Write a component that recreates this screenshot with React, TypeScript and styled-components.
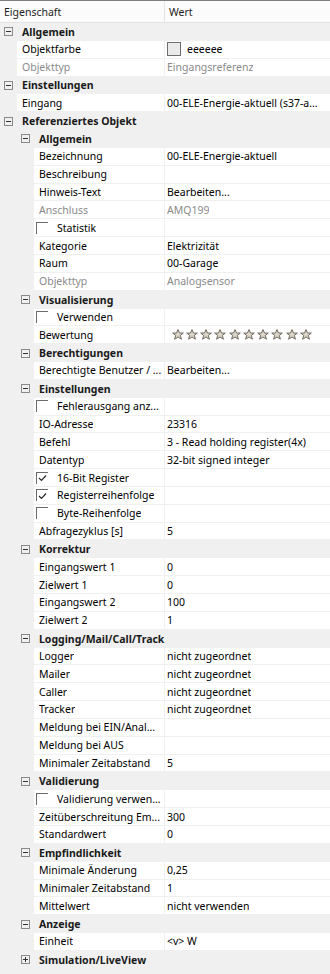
import React from 'react';
import styled, { createGlobalStyle } from 'styled-components';

type Row =
  | { kind: 'cat'; level: number; title: string; collapsed?: boolean }
  | {
      kind: 'prop';
      level: number;
      label: string;
      value?: string;
      disabled?: boolean;
      editor?: 'color' | 'stars';
    }
  | { kind: 'check'; level: number; label: string; checked?: boolean };

const ROW_H = 17.85;
const LABEL_END = 164;

const NZ = 'nicht zugeordnet';

const rows: Row[] = [
  { kind: 'cat', level: 0, title: 'Allgemein' },
  { kind: 'prop', level: 0, label: 'Objektfarbe', value: 'eeeeee', editor: 'color' },
  { kind: 'prop', level: 0, label: 'Objekttyp', value: 'Eingangsreferenz', disabled: true },
  { kind: 'cat', level: 0, title: 'Einstellungen' },
  { kind: 'prop', level: 0, label: 'Eingang', value: '00-ELE-Energie-aktuell (s37-a...' },
  { kind: 'cat', level: 0, title: 'Referenziertes Objekt' },
  { kind: 'cat', level: 1, title: 'Allgemein' },
  { kind: 'prop', level: 1, label: 'Bezeichnung', value: '00-ELE-Energie-aktuell' },
  { kind: 'prop', level: 1, label: 'Beschreibung' },
  { kind: 'prop', level: 1, label: 'Hinweis-Text', value: 'Bearbeiten...' },
  { kind: 'prop', level: 1, label: 'Anschluss', value: 'AMQ199', disabled: true },
  { kind: 'check', level: 1, label: 'Statistik' },
  { kind: 'prop', level: 1, label: 'Kategorie', value: 'Elektrizität' },
  { kind: 'prop', level: 1, label: 'Raum', value: '00-Garage' },
  { kind: 'prop', level: 1, label: 'Objekttyp', value: 'Analogsensor', disabled: true },
  { kind: 'cat', level: 1, title: 'Visualisierung' },
  { kind: 'check', level: 1, label: 'Verwenden' },
  { kind: 'prop', level: 1, label: 'Bewertung', editor: 'stars' },
  { kind: 'cat', level: 1, title: 'Berechtigungen' },
  { kind: 'prop', level: 1, label: 'Berechtigte Benutzer / ...', value: 'Bearbeiten...' },
  { kind: 'cat', level: 1, title: 'Einstellungen' },
  { kind: 'check', level: 1, label: 'Fehlerausgang anz...' },
  { kind: 'prop', level: 1, label: 'IO-Adresse', value: '23316' },
  { kind: 'prop', level: 1, label: 'Befehl', value: '3 - Read holding register(4x)' },
  { kind: 'prop', level: 1, label: 'Datentyp', value: '32-bit signed integer' },
  { kind: 'check', level: 1, label: '16-Bit Register', checked: true },
  { kind: 'check', level: 1, label: 'Registerreihenfolge', checked: true },
  { kind: 'check', level: 1, label: 'Byte-Reihenfolge' },
  { kind: 'prop', level: 1, label: 'Abfragezyklus [s]', value: '5' },
  { kind: 'cat', level: 1, title: 'Korrektur' },
  { kind: 'prop', level: 1, label: 'Eingangswert 1', value: '0' },
  { kind: 'prop', level: 1, label: 'Zielwert 1', value: '0' },
  { kind: 'prop', level: 1, label: 'Eingangswert 2', value: '100' },
  { kind: 'prop', level: 1, label: 'Zielwert 2', value: '1' },
  { kind: 'cat', level: 1, title: 'Logging/Mail/Call/Track' },
  { kind: 'prop', level: 1, label: 'Logger', value: NZ },
  { kind: 'prop', level: 1, label: 'Mailer', value: NZ },
  { kind: 'prop', level: 1, label: 'Caller', value: NZ },
  { kind: 'prop', level: 1, label: 'Tracker', value: NZ },
  { kind: 'prop', level: 1, label: 'Meldung bei EIN/Anal...' },
  { kind: 'prop', level: 1, label: 'Meldung bei AUS' },
  { kind: 'prop', level: 1, label: 'Minimaler Zeitabstand', value: '5' },
  { kind: 'cat', level: 1, title: 'Validierung' },
  { kind: 'check', level: 1, label: 'Validierung verwen...' },
  { kind: 'prop', level: 1, label: 'Zeitüberschreitung Em...', value: '300' },
  { kind: 'prop', level: 1, label: 'Standardwert', value: '0' },
  { kind: 'cat', level: 1, title: 'Empfindlichkeit' },
  { kind: 'prop', level: 1, label: 'Minimale Änderung', value: '0,25' },
  { kind: 'prop', level: 1, label: 'Minimaler Zeitabstand', value: '1' },
  { kind: 'prop', level: 1, label: 'Mittelwert', value: 'nicht verwenden' },
  { kind: 'cat', level: 1, title: 'Anzeige' },
  { kind: 'prop', level: 1, label: 'Einheit', value: '<v> W' },
  { kind: 'cat', level: 1, title: 'Simulation/LiveView', collapsed: true },
];

function indentOf(level: number) {
  return 17 + level * 17;
}

function Star() {
  return (
    <svg width="12" height="11" viewBox="0 0 12 11">
      <polygon
        points="6,0.6 7.5,4 11.3,4.1 8.3,6.4 9.4,10.2 6,8 2.6,10.2 3.7,6.4 0.7,4.1 4.5,4"
        fill="#dcd6ca"
        stroke="#6f695d"
        strokeWidth="1"
        strokeLinejoin="round"
      />
    </svg>
  );
}

function CheckMark() {
  return (
    <svg width="9" height="8" viewBox="0 0 9 8">
      <polyline points="1,4 3.5,6.5 8,1.5" fill="none" stroke="#2a2a2a" strokeWidth="1.2" />
    </svg>
  );
}

function PropertyRow({ row }: { row: Row }) {
  if (row.kind === 'cat') {
    return (
      <CatRow $level={row.level}>
        <Toggle $collapsed={!!row.collapsed} />
        <CatTitle>{row.title}</CatTitle>
      </CatRow>
    );
  }

  const indent = indentOf(row.level);

  if (row.kind === 'check') {
    return (
      <PropRow $indent={indent}>
        <LabelCell $width={LABEL_END - indent}>
          <CheckBox>{row.checked && <CheckMark />}</CheckBox>
          <Text>{row.label}</Text>
        </LabelCell>
        <ValueCell />
      </PropRow>
    );
  }

  return (
    <PropRow $indent={indent}>
      <LabelCell $width={LABEL_END - indent} $pad={5}>
        <Text $muted={row.disabled}>{row.label}</Text>
      </LabelCell>
      <ValueCell>
        {row.editor === 'color' && (
          <>
            <Swatch />
            <Text>{row.value}</Text>
          </>
        )}
        {row.editor === 'stars' && (
          <Stars>
            {Array.from({ length: 10 }).map((_, i) => (
              <Star key={i} />
            ))}
          </Stars>
        )}
        {!row.editor && <Text $muted={row.disabled}>{row.value}</Text>}
      </ValueCell>
    </PropRow>
  );
}

export default function App() {
  return (
    <>
      <GlobalStyle />
      <Grid>
        <Header>
          <HeaderCell>Eigenschaft</HeaderCell>
          <HeaderCell>Wert</HeaderCell>
        </Header>
        {rows.map((row, i) => (
          <PropertyRow key={i} row={row} />
        ))}
      </Grid>
    </>
  );
}

// Styles
const GlobalStyle = createGlobalStyle`
  html, body {
    margin: 0;
    padding: 0;
    background: #f0f0f0;
  }
  body {
    font-family: "Noto Sans", "Open Sans", sans-serif;
    font-size: 10.5px;
    color: #000;
  }
`;

const Grid = styled.div`
  width: 330px;
  min-height: 974px;
  background: #f0f0f0;
  overflow: hidden;
`;

const Header = styled.div`
  display: grid;
  grid-template-columns: ${LABEL_END}px 1fr;
  height: 23px;
  box-sizing: border-box;
  border-top: 1px solid #7d7d7d;
  border-bottom: 1px solid #e3e3e3;
  background: #fbfbfb;
`;

const HeaderCell = styled.div`
  display: flex;
  align-items: center;
  padding-left: 4px;
  color: #1e1e1e;
  & + & {
    border-left: 1px solid #e3e3e3;
    padding-left: 4px;
  }
`;

const CatRow = styled.div<{ $level: number }>`
  display: flex;
  align-items: center;
  height: ${ROW_H}px;
  padding-left: ${(p) => 4 + p.$level * 17}px;
  background: #f0f0f0;
`;

const Toggle = styled.span<{ $collapsed: boolean }>`
  position: relative;
  flex: none;
  width: 9px;
  height: 9px;
  box-sizing: border-box;
  border: 1px solid #8a8a8a;
  margin-right: 9px;

  &::before {
    content: '';
    position: absolute;
    left: 1px;
    top: 3px;
    width: 5px;
    height: 1px;
    background: #333;
  }

  &::after {
    content: '';
    display: ${(p) => (p.$collapsed ? 'block' : 'none')};
    position: absolute;
    left: 3px;
    top: 1px;
    width: 1px;
    height: 5px;
    background: #333;
  }
`;

const CatTitle = styled.span`
  font-weight: 700;
  color: #1a1a1a;
  white-space: nowrap;
`;

const PropRow = styled.div<{ $indent: number }>`
  display: flex;
  height: ${ROW_H}px;
  padding-left: ${(p) => p.$indent}px;
  background: #f0f0f0;
`;

const Cell = styled.div`
  display: flex;
  align-items: center;
  box-sizing: border-box;
  height: 100%;
  background: #fff;
  border-bottom: 1px solid #f0f0f0;
  overflow: hidden;
  white-space: nowrap;
`;

const LabelCell = styled(Cell)<{ $width: number; $pad?: number }>`
  flex: 0 0 ${(p) => p.$width}px;
  padding-left: ${(p) => p.$pad ?? 2}px;
  margin-right: 1px;
`;

const ValueCell = styled(Cell)`
  flex: 1;
  padding-left: 2px;
`;

const Text = styled.span<{ $muted?: boolean }>`
  color: ${(p) => (p.$muted ? '#8a8a8a' : '#000')};
  overflow: hidden;
  text-overflow: ellipsis;
  white-space: nowrap;
`;

const CheckBox = styled.span`
  display: flex;
  align-items: center;
  justify-content: center;
  flex: none;
  width: 12px;
  height: 12px;
  box-sizing: border-box;
  border-top: 1px solid #6b6b6b;
  border-left: 1px solid #6b6b6b;
  margin-right: 9px;
`;

const Swatch = styled.span`
  flex: none;
  width: 14px;
  height: 14px;
  box-sizing: border-box;
  border: 1px solid #6e6e6e;
  background: #eaeaea;
  margin-right: 6px;
`;

const Stars = styled.div`
  display: flex;
  flex: none;
  padding-left: 4.5px;

  & > svg {
    display: block;
    flex: none;
  }

  & > svg + svg {
    margin-left: 2.25px;
  }
`;
